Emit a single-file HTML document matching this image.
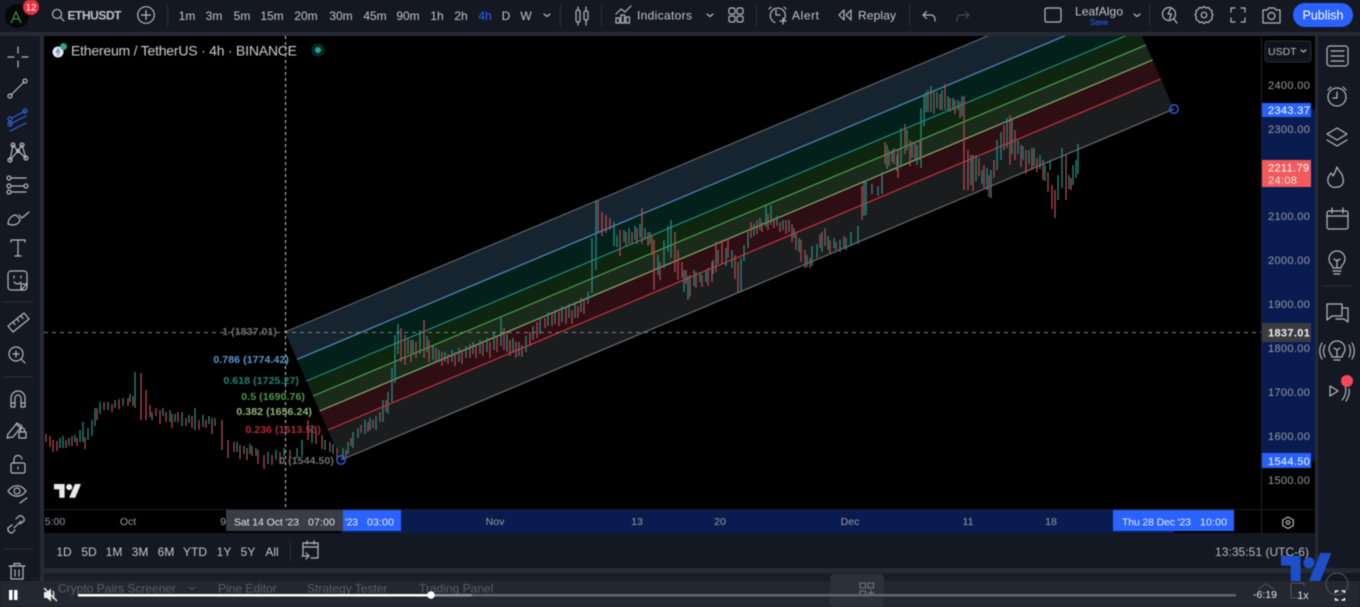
<!DOCTYPE html>
<html><head><meta charset="utf-8"><style>
html,body{margin:0;padding:0;background:#141823;width:1360px;height:607px;overflow:hidden}
svg{display:block;filter:blur(.45px)}
text{font-family:"Liberation Sans",sans-serif;font-size:12px;fill:#c3c6ce}
.ic{fill:none;stroke:#b4b7bf;stroke-width:1.2;stroke-linecap:round;stroke-linejoin:round}
.tf text{text-anchor:middle;font-size:12px}
.px text{font-size:11px;fill:#989ca6;letter-spacing:.35px}
.ta text{font-size:10.5px;fill:#989ca6;text-anchor:middle}
.fib text{font-size:10.5px;text-anchor:end;font-weight:bold;letter-spacing:.1px}
.rg text{font-size:12px;text-anchor:middle}
</style></head><body>
<svg width="1360" height="607" viewBox="0 0 1360 607" xmlns="http://www.w3.org/2000/svg">
<defs><clipPath id="cc"><rect x="44" y="36" width="1217" height="474"/></clipPath></defs>
<rect width="1360" height="607" fill="#141823"/>
<rect x="0" y="32" width="1360" height="4" fill="#262a35"/>
<rect x="40" y="36" width="4" height="545" fill="#262a35"/>
<rect x="1315" y="36" width="3" height="545" fill="#262a35"/>
<rect x="44" y="36" width="1271" height="497" fill="#000"/>

<!-- price & time axis highlight -->
<rect x="1262" y="109" width="53" height="352" fill="#0a1c4f"/>
<rect x="341" y="510" width="833" height="23" fill="#0a1c4f"/>
<rect x="44" y="509" width="1271" height="1" fill="#1a1d26"/>
<rect x="1261" y="36" width="1" height="497" fill="#1e2129"/>

<!-- channel -->
<g clip-path="url(#cc)">
<polygon points="285,332 1118,-19 1132,13 297,359.4" fill="#16242f"/>
<polygon points="297,359.4 1130,8.4 1139.4,30 306.4,381" fill="#04201b"/>
<polygon points="306.4,381 1139.4,30 1146,45 313,396" fill="#0e2510"/>
<polygon points="313,396 1146,45 1152.6,60 319.6,411" fill="#1a2b1c"/>
<polygon points="319.6,411 1152.6,60 1160.8,79 327.8,430" fill="#2d0f13"/>
<polygon points="327.8,430 1160.8,79 1174,109 341,460" fill="#1b1c1e"/>
<g fill="none" stroke-width="1.2">
<line x1="285" y1="332" x2="1118" y2="-19" stroke="#5f6168"/>
<line x1="297" y1="359.4" x2="1130" y2="8.4" stroke="#4f8fc0"/>
<line x1="306.4" y1="381" x2="1139.4" y2="30" stroke="#1f8a78"/>
<line x1="313" y1="396" x2="1146" y2="45" stroke="#4ea24e"/>
<line x1="319.6" y1="411" x2="1152.6" y2="60" stroke="#86b06a"/>
<line x1="327.8" y1="430" x2="1160.8" y2="79" stroke="#c9313f"/>
<line x1="341" y1="460" x2="1174" y2="109" stroke="#6a6c72"/>
</g>
<!-- candles teal -->
<path fill="none" stroke="#26897c" stroke-width="1.3" d="M60 438v10M63 436v12M69 438v8M75 435v7M80 430v12M83 422v20M88 428v12M92 420v16M95 408v18M100 402v12M108 402v8M115 400v8M123 398v8M130 394v8M135 372v36M152 412v8M163 408v8M170 410v12M175 414v8M182 412v14M189 415v8M195 408v22M203 415v12M209 416v8M215 418v8M237 442v10M244 446v8M250 444v10M256 448v8M268 452v12M276 450v10M284 448v8M297 448v10M302 440v16M312 425v18M325 440v10M333 444v10M343 448v12M348 442v12M353 432v16M358 428v10M365 420v14M370 418v12M376 416v14M383 400v22M388 392v22M392 368v34M395 335v48M398 324v30M408 338v16M413 340v14M420 330v24M427 336v16M433 346v14M439 350v12M445 352v10M452 350v12M459 348v14M466 346v12M473 342v12M480 340v14M487 338v14M494 332v18M501 318v28M507 334v18M513 338v14M519 342v14M526 336v16M533 326v14M540 318v16M548 312v14M555 310v14M562 306v16M569 304v14M575 302v16M581 298v14M588 292v12M592 238v55M596 200v70M614 222v24M617 235v12M624 230v12M629 228v16M635 226v14M640 224v14M645 228v12M650 232v12M658 255v20M664 240v28M668 226v26M671 220v38M684 270v22M688 276v24M694 270v16M700 272v10M706 270v12M713 260v14M718 250v14M726 248v18M732 250v18M741 258v34M744 245v16M748 232v16M754 224v12M760 218v12M766 205v22M771 205v20M777 216v10M783 220v10M789 220v12M794 228v10M799 238v14M807 255v12M812 246v20M817 244v14M822 232v20M828 236v14M834 238v10M840 240v12M846 238v12M851 232v14M858 226v18M864 182v34M866 180v35M872 184v10M878 186v10M882 172v22M887 145v24M892 150v12M897 155v16M901 128v38M907 130v20M912 142v16M917 145v20M921 108v60M924 96v30M926 92v20M931 86v26M937 92v16M942 90v20M948 96v14M953 98v12M958 100v10M962 96v20M971 155v30M976 155v26M982 170v14M987 168v22M991 170v28M997 140v30M1001 132v28M1007 118v30M1012 120v34M1018 140v14M1023 146v14M1029 150v14M1034 148v18M1040 155v14M1045 165v16M1050 160v10M1058 175v25M1062 148v40M1069 175v14M1073 165v20M1076 160v18M1078 144v30"/>
<!-- candles red -->
<path fill="none" stroke="#b0474f" stroke-width="1.3" d="M46 434v8M50 436v11M53 440v12M57 441v10M66 440v8M72 436v10M77 438v8M85 437v12M97 408v12M104 402v8M112 404v8M119 399v10M128 398v8M133 396v10M141 373v47M146 390v30M150 405v12M156 408v8M160 410v14M166 412v10M172 414v14M178 412v10M186 418v8M192 416v12M199 420v10M206 420v8M212 418v16M222 420v30M228 440v18M234 442v10M240 445v14M247 448v12M252 446v10M258 450v14M264 455v14M272 455v10M280 452v12M290 450v8M308 420v20M316 432v12M322 435v14M330 442v10M337 448v12M346 450v8M351 438v8M361 425v8M368 422v10M373 420v8M380 412v10M386 400v12M401 328v34M405 335v30M411 340v22M416 342v16M424 320v38M429 340v22M436 348v14M442 352v14M448 354v10M455 352v14M462 350v14M470 344v14M476 346v12M483 342v14M490 342v16M497 336v16M504 328v22M510 340v16M516 342v16M522 345v12M530 332v14M537 322v16M545 318v10M552 314v12M559 312v14M566 308v16M572 310v14M578 306v12M584 300v14M598 200v32M602 212v24M606 215v18M610 218v12M620 230v26M626 232v14M632 232v12M637 228v16M642 208v36M648 232v14M652 235v20M654 240v50M660 262v18M675 232v40M678 250v30M682 262v16M686 270v14M690 275v22M696 272v16M702 275v12M708 268v18M712 262v20M716 242v30M722 240v24M728 238v20M735 255v24M738 262v30M751 222v16M757 220v14M762 222v10M768 214v16M774 218v10M780 222v10M786 220v14M792 224v18M796 232v18M801 240v22M805 250v18M810 258v10M820 234v14M825 228v18M830 240v14M836 242v8M844 236v12M862 186v34M885 142v22M889 150v16M894 148v16M898 150v28M905 124v30M910 140v26M915 142v18M920 140v20M928 90v22M934 92v22M940 94v16M945 84v26M950 98v14M955 100v14M960 102v16M964 96v94M968 150v40M973 155v36M979 158v18M984 165v24M989 175v22M994 160v18M1004 125v25M1010 115v50M1015 130v30M1021 145v22M1026 150v24M1032 148v22M1037 158v14M1043 160v20M1048 172v20M1052 185v24M1055 190v28M1066 155v45M1071 178v12"/>
</g>
<line x1="44" y1="332.5" x2="1261" y2="332.5" stroke="#7d7f85" stroke-dasharray="4 4"/>
<line x1="285.5" y1="36" x2="285.5" y2="510" stroke="#d0d0d0" stroke-dasharray="3 3"/>

<circle cx="341" cy="460" r="4.2" fill="none" stroke="#2a5be0" stroke-width="1.5"/>
<circle cx="1174" cy="109" r="4.2" fill="none" stroke="#2a5be0" stroke-width="1.5"/>

<g class="fib">
<text x="277" y="335" style="fill:#6f7178">1 (1837.01)</text>
<text x="289" y="363" style="fill:#5a9ad0">0.786 (1774.42)</text>
<text x="299" y="384" style="fill:#1d8573">0.618 (1725.27)</text>
<text x="305" y="400" style="fill:#4a9c4a">0.5 (1690.76)</text>
<text x="312" y="415" style="fill:#8fb878">0.382 (1656.24)</text>
<text x="321" y="433" style="fill:#b02c38">0.236 (1613.53)</text>
<text x="334" y="464" style="fill:#6f7178">0 (1544.50)</text>
</g>

<!-- chart title -->
<circle cx="58" cy="52" r="5.5" fill="#e8eaf2"/><path d="M58 47.5l-2.6 4.6 2.6 1.6 2.6-1.6zM58 54.5l-2.2-1.5 2.2 3.3 2.2-3.3z" fill="#8a95d8"/>
<circle cx="63.5" cy="46.5" r="3.5" fill="#2aa58d"/>
<text x="71" y="55.5" style="font-size:14px;fill:#c9ccd3" textLength="226">Ethereum / TetherUS · 4h · BINANCE</text>
<circle cx="318" cy="50" r="6.5" fill="#0b2a26"/><circle cx="318" cy="50" r="3" fill="#1ca88f"/>

<!-- TV watermark -->
<g transform="translate(54,481) scale(.76)" fill="#e9e9ea"><path d="M14 22H7V11H0V4h14v18zM28 22h-8l7.5-18h8L28 22z"/><circle cx="20" cy="8" r="4"/></g>

<!-- price axis -->
<rect x="1265" y="41" width="46" height="21" rx="3" fill="#10131a" stroke="#2b2e38"/>
<text x="1268" y="55" style="font-size:10.5px;fill:#b8bbc3">USDT</text>
<path d="M1301 50l2.5 2 2.5-2" class="ic"/>
<g class="px">
<text x="1268" y="89">2400.00</text><text x="1268" y="133">2300.00</text>
<text x="1268" y="220">2100.00</text><text x="1268" y="264">2000.00</text>
<text x="1268" y="308">1900.00</text><text x="1268" y="352">1800.00</text>
<text x="1268" y="396">1700.00</text><text x="1268" y="440">1600.00</text>
<text x="1268" y="484">1500.00</text>
</g>
<rect x="1262" y="103" width="49" height="14" fill="#2962ff"/>
<text x="1268" y="114" style="font-size:11px;fill:#fff;letter-spacing:.35px">2343.37</text>
<rect x="1262" y="160" width="49" height="27" fill="#f15b5b"/>
<text x="1268" y="171.500" style="font-size:11px;fill:#fff;letter-spacing:.35px">2211.79</text>
<text x="1268" y="184" style="font-size:11px;fill:#fbdede;letter-spacing:.35px">24:08</text>
<rect x="1262" y="323" width="49" height="19" fill="#3a3c42"/>
<text x="1268" y="336.500" style="font-size:11px;fill:#f0f0f0;letter-spacing:.35px;font-weight:bold">1837.01</text>
<rect x="1262" y="453" width="49" height="15" fill="#2962ff"/>
<text x="1268" y="465" style="font-size:11px;fill:#fff;letter-spacing:.35px">1544.50</text>

<!-- time axis -->
<g class="ta">
<text x="55" y="525">5:00</text><text x="128" y="525">Oct</text><text x="223" y="525">9</text>
<text x="495" y="525">Nov</text><text x="637" y="525">13</text><text x="720" y="525">20</text>
<text x="850" y="525">Dec</text><text x="968" y="525">11</text><text x="1051" y="525">18</text>
</g>
<rect x="226" y="510" width="117" height="21" fill="#3a3d45"/>
<text x="234" y="525.500" style="font-size:10.500px;fill:#e4e5e8" textLength="65">Sat 14 Oct '23</text>
<text x="308" y="525.500" style="font-size:10.500px;fill:#e4e5e8" textLength="27">07:00</text>
<rect x="343" y="510" width="58" height="21" fill="#2962ff"/>
<text x="345" y="525.500" style="font-size:10.500px;fill:#e8edff" textLength="13">'23</text>
<text x="367" y="525.500" style="font-size:10.500px;fill:#e8edff" textLength="27">03:00</text>
<rect x="1113" y="510" width="121" height="21" fill="#2962ff"/>
<text x="1122" y="525.500" style="font-size:10.500px;fill:#e8edff" textLength="69">Thu 28 Dec '23</text>
<text x="1200" y="525.500" style="font-size:10.500px;fill:#e8edff" textLength="27">10:00</text>
<path d="M1288 517l5.300 3v5.500l-5.300 3-5.300-3V520z" class="ic" stroke-width="1"/><circle cx="1288" cy="522.500" r="1.800" class="ic"/>

<!-- top bar -->
<circle cx="17" cy="16" r="12" fill="#05070a"/>
<path d="M11 23l5-11 5 11M13 19h6" fill="none" stroke="#3d8c3d" stroke-width="1.300"/>
<circle cx="31" cy="7" r="8" fill="#e9313f"/><text x="31" y="10.500" style="font-size:9.500px;fill:#fff;text-anchor:middle">12</text>
<circle cx="57" cy="14" r="4.500" class="ic"/><path d="M60.500 17.500l3.500 3.500" class="ic"/>
<text x="67.500" y="19.500" style="font-weight:bold;fill:#bfc2ca" textLength="54">ETHUSDT</text>
<circle cx="146" cy="15" r="8.300" class="ic"/><path d="M141.500 15h9M146 10.500v9" class="ic"/>
<line x1="167.500" y1="5" x2="167.500" y2="26" stroke="#2d303a"/>
<g class="tf">
<text x="187" y="20">1m</text><text x="214" y="20">3m</text><text x="242" y="20">5m</text><text x="272" y="20">15m</text>
<text x="306" y="20">20m</text><text x="341" y="20">30m</text><text x="375" y="20">45m</text><text x="408" y="20">90m</text>
<text x="437" y="20">1h</text><text x="461" y="20">2h</text><text x="485" y="20" style="fill:#2962ff">4h</text>
<text x="506" y="20">D</text><text x="526" y="20">W</text>
</g>
<path d="M544 14l3 2.500 3-2.500" class="ic"/>
<line x1="560.500" y1="5" x2="560.500" y2="26" stroke="#2d303a"/>
<g class="ic"><path d="M578 7v3M578 22v3M586 7v4M586 20v5"/><rect x="576" y="10" width="4" height="12" rx="1.500"/><rect x="584" y="11" width="4" height="9" rx="1.500"/></g>
<line x1="601.500" y1="5" x2="601.500" y2="26" stroke="#2d303a"/>
<g class="ic"><path d="M616 14l5-5 4 3 6-6"/><rect x="616" y="18" width="3.500" height="5"/><rect x="621" y="15" width="3.500" height="8"/><rect x="626" y="17" width="3.500" height="6"/></g>
<text x="637" y="19.500" textLength="55">Indicators</text>
<path d="M707 14l3 2.500 3-2.500" class="ic"/>
<g class="ic"><rect x="729" y="8" width="6" height="6" rx="1.500"/><rect x="737" y="8" width="6" height="6" rx="1.500"/><rect x="729" y="16" width="6" height="6" rx="1.500"/><rect x="737" y="16" width="6" height="6" rx="1.500"/></g>
<line x1="756.500" y1="5" x2="756.500" y2="26" stroke="#2d303a"/>
<g class="ic"><path d="M783 21a7.500 7.500 0 1 0-8 1.500"/><path d="M776 10v5h4"/><path d="M769 9l2-2M784 7l2 2M780 21h6M783 18v6"/></g>
<text x="792" y="19.500" textLength="27">Alert</text>
<g class="ic"><path d="M844 10l-5 5 5 5zM851 10l-5 5 5 5z"/></g>
<text x="858" y="19.500" textLength="38">Replay</text>
<line x1="909.500" y1="5" x2="909.500" y2="26" stroke="#2d303a"/>
<path d="M923 15h8a4 4 0 0 1 4 4v2M923 15l3.500-3.500M923 15l3.500 3.500" class="ic"/>
<path d="M969 15h-8a4 4 0 0 0-4 4v2M969 15l-3.500-3.500M969 15l-3.500 3.500" class="ic" style="stroke:#454852"/>
<rect x="1045" y="8" width="16" height="14" rx="1.500" class="ic"/>
<text x="1075" y="15.500" textLength="48">LeafAlgo</text>
<text x="1099" y="25" style="font-size:8px;fill:#2962ff;text-anchor:middle">Save</text>
<path d="M1134 14l3 2.500 3-2.500" class="ic"/>
<line x1="1149.500" y1="5" x2="1149.500" y2="26" stroke="#2d303a"/>
<g class="ic"><circle cx="1169" cy="14" r="6.500"/><path d="M1174 19l3 4M1171 8l-3 6h3.500l-2 5"/></g>
<g class="ic"><circle cx="1204" cy="15" r="2.800"/><path d="M1204 6.500l2 1.500 2.500-.5 1.500 2 2 1-.3 2.500 1.300 2-1.300 2 .3 2.500-2 1-1.500 2-2.500-.5-2 1.500-2-1.500-2.500.5-1.500-2-2-1 .3-2.500-1.300-2 1.300-2-.3-2.500 2-1 1.500-2 2.500.5z"/></g>
<path d="M1231 12V8h4M1241 8h4v4M1245 18v4h-4M1235 22h-4v-4" class="ic"/>
<g class="ic"><path d="M1263 10h4l1.500-2h6l1.500 2h4v13h-17z"/><circle cx="1271.500" cy="16" r="3.500"/></g>
<rect x="1293" y="3" width="60" height="24" rx="12" fill="#2962ff"/>
<text x="1323" y="19.500" style="fill:#fff;text-anchor:middle;font-size:12.500px">Publish</text>

<!-- left tools -->
<g class="ic">
<path d="M18 47v6M18 61v6M8 57h6M22 57h6"/>
<path d="M11 95l13-13"/><circle cx="10" cy="96" r="2"/><circle cx="25" cy="81" r="2"/>
<g style="stroke:#2f5fd8"><path d="M12 118l13-7M10 124l16-8M10 131l16-8"/><circle cx="10" cy="119" r="2"/><circle cx="25" cy="111" r="2"/><circle cx="10" cy="124" r="2"/></g>
<path d="M10 160l3-15 5 6M18 151l4-6 4 13M10 160l8-9 8 7"/><circle cx="10" cy="160" r="2"/><circle cx="13" cy="145" r="2"/><circle cx="22" cy="145" r="2"/><circle cx="26" cy="158" r="2"/><circle cx="18" cy="151" r="1.500"/>
<path d="M11 178h15M11 186h13M11 192h15"/><circle cx="9" cy="178" r="2"/><circle cx="9" cy="186" r="2"/><circle cx="9" cy="192" r="2"/><circle cx="26" cy="186" r="2"/>
<path d="M8 224c0-5 4-9 8-9l4 4c0 4-4 6-8 6zM19 215l3 3 7-6"/>
<path d="M11 242v-2h14v2M18 240v16M15 256h6"/>
<rect x="8" y="271" width="19" height="19" rx="3"/><path d="M14 276v2M21 276v2M14 282c2 2.500 5 2.500 7 0M27 284l-6 6v-6z"/>
</g>
<line x1="3" y1="302" x2="33" y2="302" stroke="#2d303a"/>
<g class="ic">
<path d="M8 326l16-13 5 6-16 13zM13 322l2 2.500M17 319l2 2.500M21 316l2 2.500"/>
<circle cx="16" cy="354" r="7"/><path d="M13 354h6M16 351v6M21 359l4 4"/>
</g>
<line x1="3" y1="377" x2="33" y2="377" stroke="#2d303a"/>
<g class="ic">
<path d="M11 407v-9a7 7 0 0 1 14 0v9h-4v-9a3 3 0 0 0-6 0v9zM11 403h4M21 403h4"/>
<path d="M8 434l9-11 5 3-9 11-6 1zM16 424l5 4"/><rect x="19" y="432" width="7" height="6"/><path d="M20.500 432v-2a2 2 0 0 1 4 0v2"/>
<rect x="11" y="463" width="14" height="10" rx="1.500"/><path d="M14 463v-3a4 4 0 0 1 8-1M18 467v2"/>
<path d="M8 491c5-7 13-7 18 0-5 7-13 7-18 0z"/><circle cx="17" cy="491" r="3"/><path d="M20 503l4-3 3-2"/>
<path d="M15 530l-3 3a4 4 0 0 1-4-5l4-3M20 524l4-3a4 4 0 0 0-5-5l-3 3M14 528l7-7"/>
</g>
<line x1="3" y1="549" x2="33" y2="549" stroke="#2d303a"/>

<!-- right sidebar -->
<g class="ic">
<rect x="1327" y="46" width="21" height="20" rx="3"/><path d="M1331 51h13M1331 56h13M1331 61h13"/>
<circle cx="1337" cy="97" r="9"/><path d="M1337 92v6h-4M1328 90l3-3M1343 87l3 3"/>
<path d="M1337 128l10 6-10 6-10-6zM1327 140l10 6 10-6"/>
<path d="M1337 167c1 4 6 6 6 12a6 6 0 0 1-6 8 7 7 0 0 1-9-8c0-3 2-4 3-6 1 1 2 2 2 3 2-3 3-6 4-9z"/>
<rect x="1327" y="211" width="21" height="18" rx="2"/><path d="M1327 216h21M1332 208v5M1343 208v5"/>
<path d="M1333 268c0-3-4-4-4-9a8 8 0 0 1 16 0c0 5-4 6-4 9zM1333 271h8M1334 274h6M1337 268v-8M1334 259l3 2 3-2"/>
</g>
<line x1="1323" y1="286" x2="1352" y2="286" stroke="#2d303a"/>
<g class="ic">
<path d="M1327 304h15v12h-10l-5 4z"/><path d="M1342 308h6v14l-4-3h-8"/>
<path d="M1332 357c0-3-3-4-3-8a8 8 0 0 1 16 0c0 4-3 5-3 8zM1334 360h6M1337 357v-7M1334 348l3 2 3-2M1325 345c-2 4-2 8 0 12M1322 343c-3 5-3 11 0 16M1349 345c2 4 2 8 0 12M1352 343c3 5 3 11 0 16"/>
<path d="M1330 386l8 5-8 5zM1345 386c2 5 0 11-3 14M1349 389c1 4-1 9-3 12"/>
</g>
<circle cx="1347" cy="381" r="6" fill="#f5475b"/>

<!-- bottom bar -->
<rect x="44" y="533" width="1271" height="35" fill="#141823"/>
<g class="rg">
<text x="64" y="556">1D</text><text x="89" y="556">5D</text><text x="114" y="556">1M</text><text x="140" y="556">3M</text>
<text x="166" y="556">6M</text><text x="195" y="556">YTD</text><text x="224" y="556">1Y</text><text x="248" y="556">5Y</text><text x="272" y="556">All</text>
</g>
<line x1="290.500" y1="542" x2="290.500" y2="561" stroke="#2d303a"/>
<g class="ic"><path d="M303 556v-13h15v15h-7M303 547h15M307 541v3M314 541v3M302 556h6M306 553l3 3-3 3"/></g>
<text x="1215" y="556" style="font-size:12px;fill:#b8bbc3" textLength="94">13:35:51 (UTC-6)</text>
<rect x="44" y="568" width="1316" height="5" fill="#262a35"/>
<rect x="44" y="573" width="1271" height="8" fill="#191d28"/>

<!-- video overlay -->
<rect x="0" y="581" width="1360" height="26" fill="#23272f"/>
<g class="ic"><path d="M9 566h16M14 566v-2.500h6v2.500M11 566v13h12v-13M15 570v6M19 570v6"/></g>
<rect x="830" y="574" width="54" height="33" rx="4" fill="#2b303a"/>
<g style="fill:#595d66"><text x="58" y="592.500" style="fill:#595d66">Crypto Pairs Screener</text><text x="218" y="592.500" style="fill:#595d66">Pine Editor</text><text x="307" y="592.500" style="fill:#595d66">Strategy Tester</text><text x="419" y="592.500" style="fill:#595d66">Trading Panel</text></g>
<path d="M189 587l3 2.500 3-2.500" fill="none" stroke="#555963"/>
<g fill="none" stroke="#6b6f79" stroke-width="1.200"><rect x="860" y="583" width="5.500" height="5"/><rect x="868" y="583" width="5.500" height="5"/><rect x="860" y="591" width="5.500" height="4"/><path d="M868 593h6M871 590v6"/></g>
<rect x="9" y="590" width="3.500" height="10" fill="#fff"/><rect x="14" y="590" width="3.500" height="10" fill="#fff"/>
<path d="M44 592h3l4-3.500v13l-4-3.500h-3z" fill="#eee"/><path d="M44 588l13 13M53 591c1 2 1 5 0 8" stroke="#eee" stroke-width="1.300" fill="none"/>
<rect x="78" y="594" width="1158" height="2.500" fill="#5f6670"/>
<rect x="431" y="594" width="41" height="2.500" fill="#8b94a4"/>
<rect x="78" y="594" width="353" height="2.500" fill="#fff"/>
<circle cx="431" cy="595" r="3.800" fill="#fff"/>
<path d="M1258 589l8-5 8 5" fill="none" stroke="#50545d"/>
<text x="1265" y="598" style="font-size:10.500px;fill:#e6e6e6;text-anchor:middle">-6:19</text>
<path d="M1300 598h-9v-15h13v3" fill="none" stroke="#50545d"/>
<text x="1303" y="599" style="font-size:11px;fill:#e6e6e6;text-anchor:middle">1x</text>
<circle cx="1337" cy="584" r="11" fill="none" stroke="#50545d"/>
<path d="M1336 593v-2h3M1342 591h3v2M1345 598v2h-3M1339 600h-3v-2" fill="none" stroke="#f2f2f2" stroke-width="1.500" transform="translate(-.5,0)"/>
<g transform="translate(1281,553) scale(1.4)" fill="#1d4fc8"><path d="M14 20H7V9H0V2h14v18zM28 20h-8L28 0h8z"/><circle cx="20" cy="7" r="4"/></g>
</svg>
</body></html>
